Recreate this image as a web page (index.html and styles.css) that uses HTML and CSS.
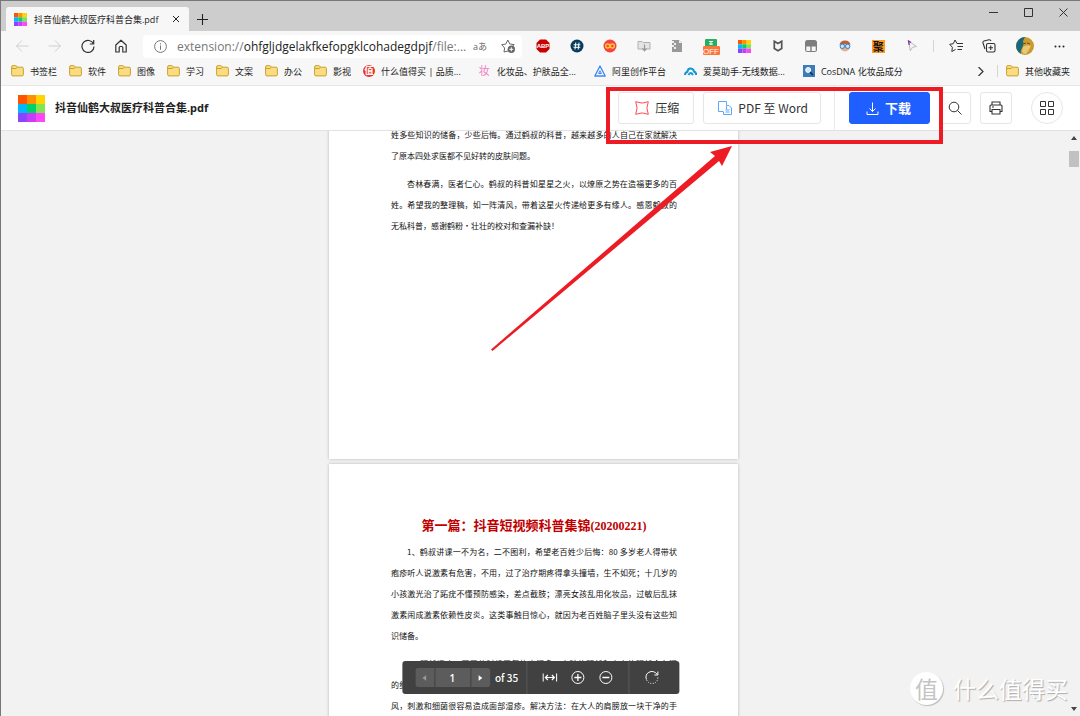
FILE: index.html
```html
<!DOCTYPE html>
<html lang="zh-CN">
<head>
<meta charset="utf-8">
<title>抖音仙鹤大叔医疗科普合集.pdf</title>
<link rel="stylesheet" href="styles.css">
</head>
<body>
<svg class="defs" aria-hidden="true">
  <symbol id="rainbow" viewBox="0 0 27 27">
    <path fill="#ff5400" d="M0 0h9v9H0z"/><path fill="#ff9100" d="M9 0h9v9H9z"/><path fill="#ffd400" d="M18 0h9v9h-9z"/>
    <path fill="#00b8ff" d="M0 9h9v9H0z"/><path fill="#00d26b" d="M9 9h9v9H9z"/><path fill="#84e552" d="M18 9h9v9h-9z"/>
    <path fill="#8a46ff" d="M0 18h9v9H0z"/><path fill="#c83cfb" d="M9 18h9v9H9z"/><path fill="#ff46f8" d="M18 18h9v9h-9z"/>
  </symbol>
  <symbol id="folder" viewBox="0 0 13 12">
    <path d="M.6 2q0-1.4 1.4-1.4h2.6q.8 0 1.2.7l.5.9H11q1.400 0 1.400 1.400v5.900q0 1.400-1.400 1.400H2Q.6 10.900.6 9.500z" fill="#fbdc80" stroke="#c39a22" stroke-width=".9"/>
    <path d="M.8 3.500h4.200l1.300-1.200" fill="none" stroke="#c39a22" stroke-width=".9"/>
  </symbol>
</svg>
<div class="browser">
  <header class="tabs">
    <div class="tab">
      <svg class="i13"><use href="#rainbow"/></svg>
      <span class="tab-title">抖音仙鹤大叔医疗科普合集.pdf</span>
      <button class="ghost" aria-label="关闭标签页"><svg class="i8" viewBox="0 0 8 8" fill="none" stroke="#222"><path d="M1 1l6 6M7 1L1 7"/></svg></button>
    </div>
    <button class="ghost new-tab" aria-label="新建标签页"><svg class="i11" viewBox="0 0 11 11" fill="none" stroke="#222" stroke-width="1.100"><path d="M5.500 0v11M0 5.500h11"/></svg></button>
    <div class="window-buttons">
      <button class="ghost" aria-label="最小化"><svg class="i9" viewBox="0 0 9 9" fill="none" stroke="#333"><path d="M0 4.500h9"/></svg></button>
      <button class="ghost" aria-label="最大化"><svg class="i9" viewBox="0 0 9 9" fill="none" stroke="#333"><path d="M.5.5h8v8h-8z"/></svg></button>
      <button class="ghost" aria-label="关闭"><svg class="i9" viewBox="0 0 9 9" fill="none" stroke="#333"><path d="M.5.5l8 8M8.500.5l-8 8"/></svg></button>
    </div>
  </header>

  <nav class="toolbar">
    <div class="nav-buttons">
      <button class="ghost" aria-label="后退"><svg class="i14" viewBox="0 0 14 14" fill="none" stroke="#cfcfcf"><path d="M13.500 7H1.500M7 1.500L1.500 7 7 12.500"/></svg></button>
      <button class="ghost" aria-label="前进"><svg class="i14" viewBox="0 0 14 14" fill="none" stroke="#cfcfcf"><path d="M.5 7h12M7 1.500L12.500 7 7 12.500"/></svg></button>
      <button class="ghost" aria-label="刷新"><svg class="i14" viewBox="0 0 14 14" fill="none" stroke="#333" stroke-width="1.200"><path d="M12.500 5A6 6 0 1 0 13 7.500M12.700 1v4H8.800"/></svg></button>
      <button class="ghost" aria-label="主页"><svg class="i14" viewBox="0 0 14 14" fill="none" stroke="#333" stroke-width="1.200" stroke-linejoin="round"><path d="M1.800 6L7 1.200 12.200 6v7H8.800V8.500q0-1-1-1H6.200q-1 0-1 1V13H1.800z"/></svg></button>
    </div>
    <div class="address">
      <svg class="i13" viewBox="0 0 13 13" fill="none" stroke="#777"><circle cx="6.500" cy="6.500" r="5.900"/><path d="M6.500 5.500v4.300M6.500 3.200v1.200"/></svg>
      <div class="url" role="textbox" tabindex="0" aria-label="地址栏">extension://<b>ohfgljdgelakfkefopgklcohadegdpjf</b>/file:...</div>
      <span class="reader">aあ</span>
      <button class="ghost" aria-label="添加到收藏夹"><svg class="i14" viewBox="0 0 14 14" fill="none" stroke="#666"><path d="M7 12L3 13l.6-4L.7 5.700l4-.6L6.800 1l2 4 4.300.6-1.600 1.700" stroke-linejoin="round"/><circle cx="10.300" cy="10.300" r="3.700" fill="#666" stroke="none"/><path d="M10.300 8.300v4M8.300 10.300h4" stroke="#fff"/></svg></button>
    </div>
    <div class="extensions">
      <button class="ghost ext" aria-label="ABP"><svg viewBox="0 0 20 20"><path fill="#c80000" d="M7 3.500h6L16.500 7v6L13 16.500H7L3.500 13V7z"/><text x="10" y="12" class="abp">ABP</text></svg></button>
      <button class="ghost ext" aria-label="标签"><svg viewBox="0 0 20 20"><circle cx="10" cy="10" r="6.500" fill="#0b3c5d"/><path d="M8.800 6.500l-.8 7M12 6.500l-.8 7M6.700 8.800h6.700M6.500 11.300h6.700" stroke="#fff"/></svg></button>
      <button class="ghost ext" aria-label="无限"><svg viewBox="0 0 20 20"><circle cx="10" cy="10" r="6.500" fill="#f9423f"/><g fill="none" stroke="#ffc93c" stroke-width="1.400"><circle cx="7.700" cy="10" r="2"/><circle cx="12.300" cy="10" r="2"/></g></svg></button>
      <button class="ghost ext" aria-label="文件夹下载"><svg viewBox="0 0 20 20"><path d="M4 13V5.500h4l1 1h7V13z" fill="#e4e4e4" stroke="#b0b0b0"/><path d="M10.500 8.500v6M8.500 12.500l2 2.300 2-2.300" fill="none" stroke="#999" stroke-width="1.200"/></svg></button>
      <button class="ghost ext" aria-label="压缩文件"><svg viewBox="0 0 20 20"><path fill="#999" d="M5 4h7l3 3v9H5z"/><path fill="#eee" d="M12 4v3h3zM5 5h2v2H5zM7 7h2v2H7zM5 9h2v2H5zM7 11h2v2H7z"/></svg></button>
      <button class="ghost ext" aria-label="翻译开关"><svg viewBox="0 0 20 20"><path fill="#27ae60" d="M4 10V4q0-1 1-1h10q1 0 1 1v6z"/><path d="M10 5v4M8 5.500h4M8 8h4" stroke="#fff"/><rect x="2" y="10" width="17" height="9" rx="1" fill="#ff7438"/><text x="10" y="18" class="off">OFF</text></svg></button>
      <button class="ghost ext" aria-label="SmallPDF"><svg class="i13"><use href="#rainbow"/></svg></button>
      <button class="ghost ext" aria-label="McAfee"><svg viewBox="0 0 20 20"><path fill="none" stroke="#555" stroke-width="1.700" d="M6.300 5.300L10 7.500l3.700-2.200v7.200L10 14.800l-3.700-2.300z"/></svg></button>
      <button class="ghost ext" aria-label="脚本"><svg viewBox="0 0 20 20"><rect x="4" y="4" width="12" height="12" rx="2.500" fill="#7d7d7d"/><path fill="#f5f5f5" d="M5.300 10.500h4V15h-4zM10.700 10.500h4V15h-4z"/></svg></button>
      <button class="ghost ext" aria-label="助手"><svg viewBox="0 0 20 20"><circle cx="10" cy="10.500" r="5" fill="#e8b090"/><path fill="#b3643c" d="M4.500 9q.5-4.500 5.500-4.500t5.500 4.500l-2-1h-7z"/><circle cx="7.300" cy="10.300" r="2.200" fill="#cfe4f8" stroke="#2a7fd0"/><circle cx="12.700" cy="10.300" r="2.200" fill="#cfe4f8" stroke="#2a7fd0"/></svg></button>
      <button class="ghost ext" aria-label="聚合"><span class="ju">聚</span></button>
      <button class="ghost ext" aria-label="光标"><svg viewBox="0 0 20 20"><path d="M6.500 5l8 5.500-4 .8-2.200 3.500z" fill="#f7f7f7" stroke="#bbb"/><path d="M9 6.500L6.500 5l.7 4" fill="none" stroke="#7b2fa0" stroke-width="1.200"/></svg></button>
    </div>
    <div class="tools">
      <button class="ghost" aria-label="收藏夹"><svg class="i14" viewBox="0 0 14 14" fill="none" stroke="#333" stroke-linejoin="round"><path d="M8 4.500L6 1 4.300 4.700.7 5.300l2.700 3L2.800 12.500l3.700-2M8 4.500h6M8.500 7.500H14M8.500 10.500H13"/></svg></button>
      <button class="ghost" aria-label="集锦"><svg class="i14" viewBox="0 0 14 14" fill="none" stroke="#333" stroke-width="1.100"><rect x="4.500" y="4.500" width="8.500" height="8.500" rx="1.500"/><path d="M3 10L1 4q-.4-1.500 1-2l5-1.200q1.500-.3 2 1.200M8.750 6.500v4.500M6.500 8.750H11"/></svg></button>
      <button class="ghost avatar" aria-label="个人资料"><svg class="i18" viewBox="0 0 18 18"><circle cx="9" cy="9" r="9" fill="#c99a2e"/><path fill="#17677c" d="M9 0A9 9 0 0 0 5 17q-1-3 1-6T7 4z"/><path fill="#e5c878" d="M7 10q3-3 8-1-2 4-5 8-4 0-4-3z"/><path d="M7 7l3-1M11 6l3 1" stroke="#704d15"/></svg></button>
      <button class="ghost" aria-label="更多"><svg class="i11" viewBox="0 0 11 11" fill="#222"><circle cx="1.500" cy="5.500" r="1"/><circle cx="5.500" cy="5.500" r="1"/><circle cx="9.500" cy="5.500" r="1"/></svg></button>
    </div>
  </nav>

  <nav class="bookmarks">
    <a href="#"><svg class="folder"><use href="#folder"/></svg>书签栏</a>
    <a href="#"><svg class="folder"><use href="#folder"/></svg>软件</a>
    <a href="#"><svg class="folder"><use href="#folder"/></svg>图像</a>
    <a href="#"><svg class="folder"><use href="#folder"/></svg>学习</a>
    <a href="#"><svg class="folder"><use href="#folder"/></svg>文案</a>
    <a href="#"><svg class="folder"><use href="#folder"/></svg>办公</a>
    <a href="#"><svg class="folder"><use href="#folder"/></svg>影视</a>
    <a href="#" class="site"><span class="zhi">值</span>什么值得买 | 品质...</a>
    <a href="#" class="site"><span class="zhuang">妆</span>化妆品、护肤品全...</a>
    <a href="#" class="site"><svg class="i12" viewBox="0 0 12 12" fill="none" stroke="#3b86f7" stroke-width="1.300" stroke-linejoin="round"><path d="M6 1l5.200 10H.8z"/><path d="M6 5.800L4.600 8.500h2.800z" stroke-width="1"/></svg>阿里创作平台</a>
    <a href="#" class="site"><svg class="i13" viewBox="0 0 13 13" fill="none" stroke="#1496d8" stroke-width="2"><path d="M1 10q0-2.500 2.200-3Q4 3 7 3.500q2.500.3 3 3 2.200.8 2.200 3.500M4.500 10q2-4 4.500 0"/></svg>爱莫助手-无线数据...</a>
    <a href="#" class="site"><svg class="i12" viewBox="0 0 12 12"><path fill="#3c7cba" d="M0 0h12v12H0z"/><circle cx="5.200" cy="5" r="2.500" fill="#cfe8fa" stroke="#fff"/><path d="M7 7l3 3" stroke="#142c44" stroke-width="1.500"/></svg>CosDNA 化妆品成分</a>
    <button class="ghost more" aria-label="更多收藏"><svg class="i9" viewBox="0 0 9 9" fill="none" stroke="#333" stroke-width="1.200"><path d="M2.500 0L7 4.500 2.500 9"/></svg></button>
    <a href="#" class="other"><svg class="folder"><use href="#folder"/></svg>其他收藏夹</a>
  </nav>

  <header class="app-bar">
    <svg class="i27"><use href="#rainbow"/></svg>
    <h1>抖音仙鹤大叔医疗科普合集.pdf</h1>
    <div class="actions">
      <button class="btn compress"><svg class="i14" viewBox="0 0 14 14" fill="none" stroke="#ff4b55"><path d="M.7.7Q7 3.500 13.300.7 10.500 7 13.300 13.300 7 10.500.7 13.300 3.500 7 .7.7z"/></svg>压缩</button>
      <button class="btn"><svg class="i14" viewBox="0 0 14 14" fill="none" stroke="#5aa9f8"><path d="M5 10.500H.5V.5h8V4M8.500 4.500H11l2.500 2.500v6.500h-8v-3"/><path d="M8.500 4.500v4M7.500 9h4M7.500 11h4"/></svg>PDF 至 Word</button>
      <div class="primary"><button class="btn download"><svg class="i13" viewBox="0 0 13 13" fill="none" stroke="#fff"><path d="M6.500.5v9M3.500 6.500l3 3 3-3M1 9.500v3h11v-3"/></svg>下载</button></div>
      <button class="btn square" aria-label="搜索"><svg class="i14" viewBox="0 0 14 14" fill="none" stroke="#333"><circle cx="6" cy="6" r="4.800"/><path d="M9.500 9.500l4 4"/></svg></button>
      <button class="btn square" aria-label="打印"><svg class="i14" viewBox="0 0 14 14" fill="none" stroke="#333" stroke-width="1.100"><path d="M3 4V1h8v3M3 10.500H1V5q0-1 1-1h10q1 0 1 1v5.500h-2M3 8.500h8V13H3zM3 6h2"/></svg></button>
      <button class="btn square round" aria-label="应用"><svg class="i14" viewBox="0 0 14 14" fill="none" stroke="#333"><path d="M.5.500h5v5h-5zM8.500.5h5v5h-5zM.5 8.500h5v5h-5zM8.500 8.500h5v5h-5z"/></svg></button>
    </div>
  </header>

  <main class="viewer">
    <div class="pages">
      <article class="page first">
        <div class="para"><p>姓多些知识的储备，少些后悔。通过鹤叔的科普，越来越多的人自己在家就解决</p><p class="end">了原本四处求医都不见好转的皮肤问题。</p></div>
        <div class="para"><p class="indent">杏林春满，医者仁心。鹤叔的科普如星星之火，以燎原之势在造福更多的百</p><p>姓。希望我的整理稿，如一阵清风，带着这星火传递给更多有缘人。感恩鹤叔的</p><p class="end">无私科普，感谢鹤粉·壮壮的校对和查漏补缺！</p></div>
      </article>
      <article class="page second">
        <h2>第一篇：抖音短视频科普集锦<span class="date">(20200221)</span></h2>
        <div class="para"><p class="indent">1、鹤叔讲课一不为名，二不图利，希望老百姓少后悔：80 多岁老人得带状</p><p>疱疹听人说激素有危害，不用，过了治疗期疼得拿头撞墙，生不如死；十几岁的</p><p>小孩激光治了跖疣不懂预防感染，差点截肢；漂亮女孩乱用化妆品，过敏后乱抹</p><p>激素闹成激素依赖性皮炎。这类事触目惊心，就因为老百姓脑子里头没有这些知</p><p class="end">识储备。</p></div>
        <div class="para"><p class="indent">2、颈部湿疹：夏天的时候天气热出汗多，小孩的颈部和大人的颈部会有汗</p><p>的细菌，容易滋生在皮肤的褶皱里面，时间长了就会刺激皮肤，夏天出汗以后受</p><p>风，刺激和细菌很容易造成面部湿疹。解决方法：在大人的肩膀放一块干净的手</p></div>
      </article>
    </div>
    <div class="scrollbar" aria-hidden="true">
      <svg class="arrow" viewBox="0 0 6 4"><path fill="#444" d="M0 4l3-4 3 4z"/></svg>
      <span class="thumb"></span>
      <svg class="arrow down" viewBox="0 0 6 4"><path fill="#444" d="M0 0l3 4 3-4z"/></svg>
    </div>
    <div class="page-controls">
      <div class="pager">
        <button aria-label="上一页"><svg class="tri" viewBox="0 0 4 6"><path fill="#999" d="M4 0v6L0 3z"/></svg></button>
        <input type="text" value="1" aria-label="页码">
        <button aria-label="下一页"><svg class="tri" viewBox="0 0 4 6"><path fill="#fff" d="M0 0v6l4-3z"/></svg></button>
      </div>
      <span class="count">of 35</span>
      <div class="zoom">
        <button class="ghost" aria-label="适合宽度"><svg class="i15" viewBox="0 0 15 15" fill="none" stroke="#fff" stroke-width="1.200"><path d="M.7 3.500v8M14.300 3.500v8M3 7.500h9M5.500 5L3 7.500 5.500 10M9.500 5L12 7.500 9.500 10"/></svg></button>
        <button class="ghost" aria-label="放大"><svg class="i15" viewBox="0 0 15 15" fill="none" stroke="#fff"><circle cx="7.500" cy="7.500" r="6"/><path d="M7.500 4v7M4 7.500h7" stroke-width="1.300"/></svg></button>
        <button class="ghost" aria-label="缩小"><svg class="i15" viewBox="0 0 15 15" fill="none" stroke="#fff"><circle cx="7.500" cy="7.500" r="6"/><path d="M4 7.500h7" stroke-width="1.300"/></svg></button>
      </div>
      <button class="ghost rotate" aria-label="旋转"><svg class="i15" viewBox="0 0 15 15" fill="none" stroke="#fff"><path d="M2 9.500Q.5 4.500 4.500 2.300 9-.2 13 4.500M13.500 1.500v3.500H10"/><path d="M13.500 7.500q-.5 6-6 6-3.500 0-5.500-4" stroke-dasharray="1 1.500"/></svg></button>
    </div>
  </main>
</div>

<svg class="annotation" viewBox="0 0 350 270" aria-hidden="true">
  <rect x="118" y="4" width="333" height="53" fill="none" stroke="#ed1c24" stroke-width="4"/>
  <path fill="#ed1c24" d="M1 264.500L225 71l-5-4 22-6-10 20-3-5L2.500 266z"/>
</svg>
<div class="watermark"><span class="seal">值</span>什么值得买</div>
</body>
</html>
```
FILE: styles.css
```css
* { box-sizing: border-box; }
body {
  margin: 0;
  font-family: "Open Sans", "Noto Sans CJK SC", sans-serif;
  font-size: 9px;
  color: #222;
}
h1, h2, p { margin: 0; }
button { font: inherit; color: inherit; padding: 0; border: 0; cursor: pointer; }
a { color: inherit; text-decoration: none; }
svg { display: block; flex: none; }
.defs { position: absolute; width: 0; height: 0; }
.ghost { background: none; display: flex; align-items: center; justify-content: center; }

.i8 { width: 8px; height: 8px; }
.i9 { width: 9px; height: 9px; }
.i11 { width: 11px; height: 11px; }
.i12 { width: 12px; height: 12px; }
.i13 { width: 13px; height: 13px; }
.i14 { width: 14px; height: 14px; }
.i15 { width: 15px; height: 15px; }
.i18 { width: 18px; height: 18px; }
.i27 { width: 27px; height: 27px; }

.browser {
  height: 100vh;
  display: flex;
  flex-direction: column;
  border-top: 1px solid #777;
  border-left: 1px solid #777;
  background: #f7f7f7;
}

.tabs { display: flex; height: 30px; background: #cdcdcd; padding-left: 5px; flex: none; }
.tab {
  display: flex;
  align-items: center;
  gap: 7px;
  margin-top: 6px;
  padding: 0 9px 0 8px;
  background: #f7f7f7;
  border-radius: 3px 3px 0 0;
  width: 183px;
}
.tab-title { flex: 1; white-space: nowrap; }
.new-tab { padding: 6px 8px 0; }
.window-buttons { margin-left: auto; display: flex; gap: 26px; padding: 0 12px 8px 0; }

.toolbar { display: flex; align-items: center; height: 30px; padding: 0 15px 0 14px; flex: none; }
.nav-buttons { display: flex; gap: 19px; }
.address {
  flex: 1;
  min-width: 0;
  display: flex;
  align-items: center;
  height: 23px;
  margin-left: 15px;
  padding: 0 7px 0 11px;
  background: #fff;
  border-radius: 4px;
}
.url { flex: 1; min-width: 0; margin-left: 10px; font-size: 12px; color: #777; white-space: nowrap; overflow: hidden; }
.url b { font-weight: 400; color: #222; }
.reader { font-size: 9px; color: #666; margin-right: 14px; }
.extensions { display: flex; justify-content: space-between; width: 389px; margin: 0 11px; }
.ext { width: 20px; height: 22px; }
.ext > svg:not(.i13) { width: 20px; height: 20px; }
.abp { font: bold 6px "Liberation Sans", sans-serif; fill: #fff; text-anchor: middle; }
.off { font: 8px "Liberation Sans", sans-serif; fill: #fff; text-anchor: middle; }
.ju { width: 13px; height: 13px; background: #ff9a1f; color: #111; font-size: 11px; font-weight: 700; line-height: 13px; text-align: center; }
.tools { display: flex; align-items: center; gap: 19px; border-left: 1px solid #d5d5d5; padding-left: 15px; height: 12px; }
.tools .avatar { margin: 0 1px; }

.bookmarks { display: flex; align-items: center; height: 25px; padding: 0 10px 4px; gap: 12px; white-space: nowrap; flex: none; border-bottom: 1px solid #e6e6e6; }
.bookmarks a { display: flex; align-items: center; gap: 6px; height: 19px; }
.folder { width: 13px; height: 12px; }
.bookmarks .site + .site { margin-left: 6px; }
.zhi { width: 12px; height: 12px; border-radius: 50%; background: #e9352e; color: #fff; font-size: 9px; font-weight: 700; line-height: 12px; text-align: center; }
.zhuang { width: 12px; font-size: 11px; color: #ee82c4; line-height: 12px; }
.more { margin-left: auto; }
.bookmarks .other { border-left: 1px solid #d5d5d5; padding-left: 8px; height: 12px; }

.app-bar { display: flex; align-items: center; height: 45px; padding: 0 17px; background: #fff; border-bottom: 1px solid #e2e2e2; flex: none; }
.app-bar h1 { margin-left: 10px; font: bold 11px/16px "Noto Sans", "Noto Sans CJK SC", sans-serif; white-space: nowrap; }
.actions { margin-left: auto; display: flex; align-items: center; gap: 9px; }
.btn {
  display: flex;
  align-items: center;
  gap: 6px;
  height: 32px;
  padding: 0 12px 0 14px;
  font: 12px/16px "Noto Sans CJK SC", sans-serif;
  color: #333;
  background: #fff;
  border: 1px solid #e6e6e6;
  border-radius: 3px;
  white-space: nowrap;
}
.compress { padding: 0 14px 0 16px; }
.primary { display: flex; align-items: center; height: 44px; margin-left: 4px; padding-left: 14px; border-left: 1px solid #ebebeb; }
.download { background: #1f5eff; border-color: #1f5eff; color: #fff; font-size: 13px; font-weight: 700; padding: 0 18px 0 16px; }
.square { width: 32px; padding: 0; justify-content: center; }
.round { border-radius: 50%; margin-left: 10px; }

.viewer { position: relative; flex: 1; min-height: 0; display: flex; background: #f2f2f2; overflow: hidden; }
.pages { flex: 1; display: flex; flex-direction: column; align-items: center; gap: 5px; overflow: hidden; }
.page { width: 409px; flex: none; padding: 0 61px 0 62px; background: #fff; box-shadow: 0 0 3px rgba(0, 0, 0, .25); }
.first { min-height: 335px; margin-top: -7px; }
.second { min-height: 578px; padding-top: 52px; }
.page h2 { margin-bottom: 5px; font: bold 13px/20px "Liberation Serif", "Noto Sans CJK SC", serif; text-align: center; color: #c00000; white-space: nowrap; }
.date { font-size: 12px; }
.para { margin-bottom: 7px; }
.para p { font: 8px/21px "Noto Sans CJK SC", sans-serif; color: #111; white-space: nowrap; text-align: justify; text-align-last: justify; }
.para .indent { padding-left: 16px; }
.para .end { text-align-last: left; }

.scrollbar { width: 14px; display: flex; flex-direction: column; align-items: center; padding: 5px 0 5px 2px; background: #f2f2f2; }
.arrow { width: 6px; height: 4px; }
.thumb { width: 10px; height: 16px; margin-top: 11px; background: #c1c1c1; }
.down { margin-top: auto; }

.page-controls {
  position: absolute;
  left: 50%;
  bottom: 22px;
  transform: translateX(-50%);
  display: flex;
  align-items: center;
  height: 33px;
  padding-left: 13px;
  border-radius: 3px;
  background: #414141;
  color: #fff;
}
.pager { display: flex; gap: 1px; height: 19px; border-radius: 3px; overflow: hidden; }
.pager button { width: 19px; background: #5c5c5c; display: flex; align-items: center; justify-content: center; }
.pager input { width: 35px; border: 0; padding: 0; background: #5c5c5c; color: #fff; font: 600 10px "Open Sans", sans-serif; text-align: center; }
.tri { width: 4px; height: 6px; }
.count { margin: 0 8px 0 5px; font: 500 10px "Noto Sans CJK SC", sans-serif; }
.zoom { display: flex; align-items: center; gap: 13px; height: 33px; padding: 0 15px; border-left: 1px solid #595959; border-right: 1px solid #595959; }
.rotate { padding: 0 20px 0 15px; }

.annotation { position: absolute; left: 490px; top: 85px; width: 350px; height: 270px; overflow: visible; pointer-events: none; }
.watermark {
  position: absolute;
  right: 12px;
  bottom: 11px;
  display: flex;
  align-items: center;
  gap: 10px;
  font: 23px/34px "Noto Sans CJK SC", sans-serif;
  color: #fff;
  text-shadow: 1px 1px 1px #aaa;
}
.seal { width: 33px; height: 33px; border-radius: 50%; background: #fff; color: #c4c4c4; box-shadow: 1px 1px 1px #bbb; text-align: center; line-height: 32px; text-shadow: none; }
```
